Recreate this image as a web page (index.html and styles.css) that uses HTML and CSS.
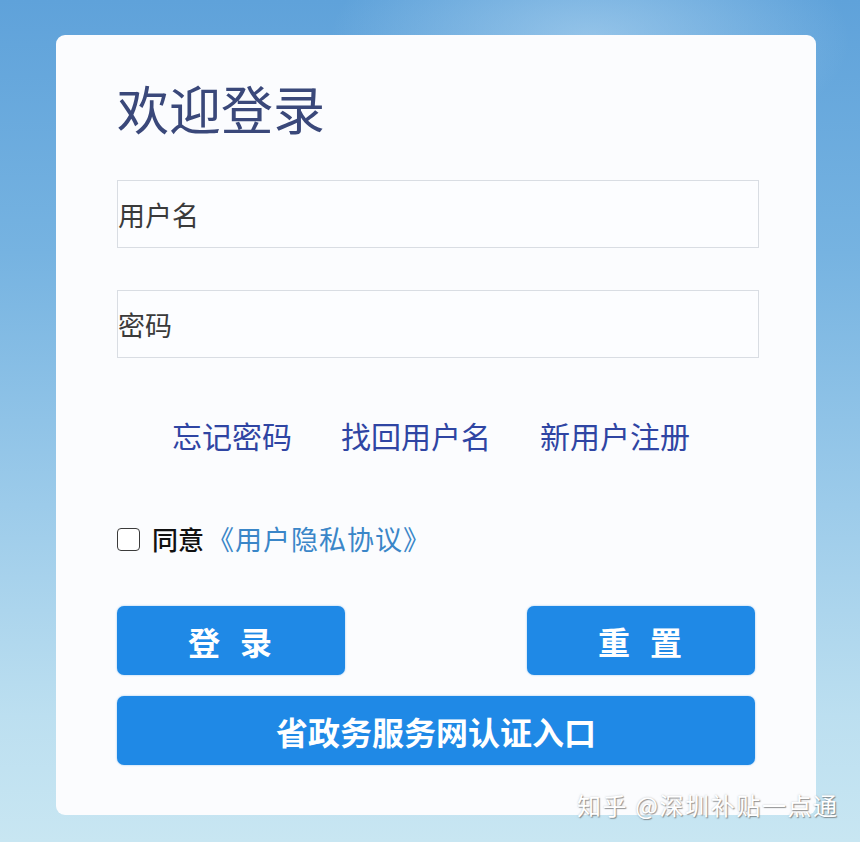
FILE: index.html
```html
<!DOCTYPE html>
<html lang="zh-CN">
<head>
<meta charset="utf-8">
<title>欢迎登录</title>
<link rel="stylesheet" href="styles.css">
</head>
<body>
<div class="page">
  <div class="card">
    <h1 class="title">欢迎登录</h1>
    <div class="field"><input class="input" type="text" placeholder="用户名"></div>
    <div class="field field-gap"><input class="input" type="password" placeholder="密码"></div>
    <div class="links">
      <a class="link" href="#">忘记密码</a>
      <a class="link" href="#">找回用户名</a>
      <a class="link" href="#">新用户注册</a>
    </div>
    <label class="agree">
      <input class="check" type="checkbox">
      <span class="agree-text">同意</span>
      <a class="agree-link" href="#">《用户隐私协议》</a>
    </label>
    <div class="btn-row">
      <button class="btn btn-half"><span class="spaced">登录</span></button>
      <button class="btn btn-half"><span class="spaced">重置</span></button>
    </div>
    <button class="btn btn-full">省政务服务网认证入口</button>
  </div>
  <div class="watermark">知乎 @深圳补贴一点通</div>
</div>
</body>
</html>
```

FILE: styles.css
```css
html, body {
  margin: 0;
  padding: 0;
}
body {
  width: 860px;
  height: 842px;
  overflow: hidden;
  font-family: "Noto Sans CJK SC", "Noto Sans", sans-serif;
  background:
    radial-gradient(ellipse 260px 120px at 590px 40px, rgba(190, 222, 244, 0.55), rgba(190, 222, 244, 0) 100%),
    linear-gradient(to bottom, #5fa2da 0%, #76b3e1 30%, #9ccbea 60%, #bcdff0 85%, #c8e6f2 100%);
}
.page {
  position: relative;
  width: 860px;
  height: 842px;
  padding: 35px 0 0 56px;
  box-sizing: border-box;
}
.card {
  width: 760px;
  height: 780px;
  box-sizing: border-box;
  background: #fbfcfe;
  border-radius: 9px;
  padding: 43px 57px 0 61px;
}
.title {
  margin: 0;
  font-size: 52px;
  line-height: 60px;
  font-weight: 400;
  color: #3a487a;
  letter-spacing: 0;
}
.field {
  margin-top: 42px;
}
.field-gap {
  margin-top: 42px;
}
.input {
  display: block;
  width: 642px;
  height: 68px;
  box-sizing: border-box;
  border: 1px solid #d9dde3;
  background: #fcfdff;
  padding: 0;
  font-family: "Noto Sans CJK SC", sans-serif;
  font-size: 27px;
  color: #333;
  outline: none;
}
.input::placeholder {
  color: #3a3a3a;
}
.links {
  display: flex;
  gap: 49px;
  padding-left: 55px;
  margin-top: 57px;
  height: 40px;
  align-items: center;
}
.link {
  font-size: 30px;
  line-height: 40px;
  color: #2f45a3;
  text-decoration: none;
}
.agree {
  display: flex;
  align-items: center;
  margin-top: 69px;
  height: 30px;
}
.check {
  appearance: none;
  -webkit-appearance: none;
  margin: 0;
  width: 23px;
  height: 23px;
  box-sizing: border-box;
  border: 1.5px solid #3b3b3b;
  border-radius: 4px;
  background: #fff;
}
.agree-text {
  margin-left: 12px;
  font-size: 26px;
  line-height: 30px;
  color: #111;
  font-weight: 500;
}
.agree-link {
  margin-left: 3px;
  font-size: 27px;
  line-height: 30px;
  letter-spacing: 1px;
  color: #3a86c8;
  text-decoration: none;
}
.btn-row {
  display: flex;
  justify-content: space-between;
  width: 638px;
  margin-top: 52px;
}
.btn {
  border: none;
  background: #1f89e6;
  color: #fff;
  border-radius: 7px;
  font-family: "Noto Sans CJK SC", sans-serif;
  font-weight: 700;
  font-size: 32px;
  height: 69px;
  padding: 0;
  box-shadow: 0 0 2px rgba(31, 137, 230, 0.5);
}
.btn-half {
  width: 228px;
}
.spaced {
  letter-spacing: 20px;
  padding-left: 18px;
}
.btn-full {
  display: block;
  width: 638px;
  margin-top: 21px;
}
.watermark {
  position: absolute;
  left: 577px;
  top: 788px;
  font-size: 24px;
  line-height: 34px;
  letter-spacing: 1.6px;
  color: #ffffff;
  text-shadow: 1px 1px 1px rgba(90, 90, 90, 0.6), 0 0 2px rgba(120, 120, 120, 0.4);
  white-space: nowrap;
}
```
